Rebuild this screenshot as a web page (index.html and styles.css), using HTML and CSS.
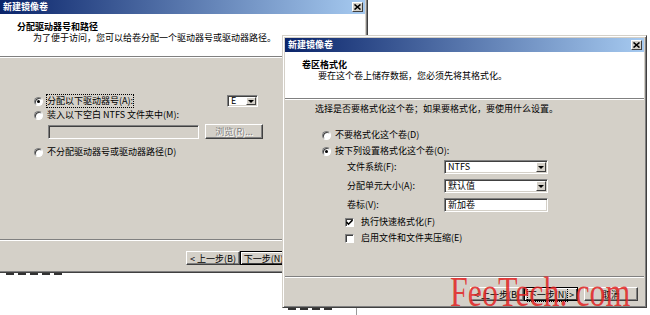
FILE: index.html
```html
<!DOCTYPE html>
<html lang="zh-CN">
<head>
  <meta charset="UTF-8">
  <title>新建镜像卷</title>
  <link rel="stylesheet" href="styles.css">
</head>
<body>
  <!-- 后面的窗口：分配驱动器号和路径 -->
  <div class="window win-back">
    <div class="titlebar">
      <span class="title">新建镜像卷</span>
      <span class="close"><svg width="7" height="6" viewBox="0 0 7 6"><path d="M0.5 0.5 L6.5 5.5 M6.5 0.5 L0.5 5.5" stroke="#000" stroke-width="1.6"/></svg></span>
    </div>
    <div class="header">
      <div class="head-title">分配驱动器号和路径</div>
      <div class="head-sub">为了便于访问，您可以给卷分配一个驱动器号或驱动器路径。</div>
    </div>
    <div class="body body-drive">
      <div class="row row-letter">
        <label class="radio"><span class="dot checked"></span><span class="focus">分配以下驱动器号(A):</span></label>
        <div class="select select-letter"><span class="value">E</span><span class="arrow"></span></div>
      </div>
      <label class="radio row-mount"><span class="dot"></span>装入以下空白 NTFS 文件夹中(M):</label>
      <div class="row row-path">
        <div class="field field-disabled"></div>
        <button class="btn btn-disabled">浏览(R)...</button>
      </div>
      <label class="radio row-none"><span class="dot"></span>不分配驱动器号或驱动器路径(D)</label>
    </div>
    <div class="footer">
      <button class="btn">&lt; 上一步(B)</button>
      <button class="btn btn-default">下一步(N) &gt;</button>
      <button class="btn btn-cancel">取消</button>
    </div>
  </div>
  <!-- 下面还露出一点别的窗口 -->
  <div class="peek peek-back"><i></i><i></i><i></i><i></i><i></i></div>

  <!-- 前面的窗口：卷区格式化 -->
  <div class="window win-front">
    <div class="titlebar">
      <span class="title">新建镜像卷</span>
      <span class="close"><svg width="7" height="6" viewBox="0 0 7 6"><path d="M0.5 0.5 L6.5 5.5 M6.5 0.5 L0.5 5.5" stroke="#000" stroke-width="1.6"/></svg></span>
    </div>
    <div class="header">
      <div class="head-title">卷区格式化</div>
      <div class="head-sub">要在这个卷上储存数据，您必须先将其格式化。</div>
    </div>
    <div class="body body-format">
      <div class="intro">选择是否要格式化这个卷；如果要格式化，要使用什么设置。</div>
      <label class="radio opt-no"><span class="dot"></span>不要格式化这个卷(D)</label>
      <label class="radio opt-yes"><span class="dot checked"></span>按下列设置格式化这个卷(O):</label>
      <div class="form-row">
        <span class="form-label">文件系统(F):</span>
        <div class="select select-wide"><span class="value">NTFS</span><span class="arrow"></span></div>
      </div>
      <div class="form-row">
        <span class="form-label">分配单元大小(A):</span>
        <div class="select select-wide"><span class="value">默认值</span><span class="arrow"></span></div>
      </div>
      <div class="form-row">
        <span class="form-label">卷标(V):</span>
        <div class="field field-wide">新加卷</div>
      </div>
      <label class="check check-quick"><span class="box"><svg width="7" height="7" viewBox="0 0 7 7"><path d="M0.5 3 L2.5 5.2 L6.5 1" stroke="#000" stroke-width="1.6" fill="none"/></svg></span>执行快速格式化(F)</label>
      <label class="check check-zip"><span class="box"></span>启用文件和文件夹压缩(E)</label>
    </div>
    <div class="footer">
      <button class="btn">&lt; 上一步(B)</button>
      <button class="btn btn-default"><span class="focus">下一步(N)</span> &gt;</button>
      <button class="btn btn-cancel">取消</button>
    </div>
  </div>
  <div class="peek peek-front"><i></i><i></i><i></i><i></i><b></b></div>

  <div class="watermark">FeoTech. com</div>
</body>
</html>
```

FILE: styles.css
```css
/* 整体 */
body {
  margin: 0;
  width: 650px;
  height: 315px;
  position: relative;
  overflow: hidden;
  background: #fff;
  font-family: "Noto Sans CJK SC", "Liberation Sans", sans-serif;
  font-size: 9px;
  color: #000;
}

/* 经典窗口框 */
.window {
  position: absolute;
  box-sizing: border-box;
  display: flex;
  flex-direction: column;
  padding: 2px;
  background: #d4d0c8;
  border: 1px solid;
  border-color: #d4d0c8 #404040 #404040 #d4d0c8;
  box-shadow: inset 1px 1px #fff, inset -1px -1px #808080;
}
.win-back {
  left: -3px;
  top: -3px;
  width: 371px;
  height: 276px;
}
.win-front {
  left: 282px;
  top: 35px;
  width: 365px;
  height: 273px;
}

/* 标题栏 */
.titlebar {
  height: 14px;
  flex: none;
  display: flex;
  align-items: center;
  justify-content: space-between;
  background: linear-gradient(to right, #0a246a, #a6caf0);
}
.title {
  color: #fff;
  font-weight: bold;
  padding-left: 3px;
  line-height: 14px;
}
.close {
  width: 11px;
  height: 10px;
  margin-right: 2px;
  box-sizing: border-box;
  display: flex;
  align-items: center;
  justify-content: center;
  background: #d4d0c8;
  border: 1px solid;
  border-color: #fff #404040 #404040 #fff;
}

/* 白色页眉 */
.header {
  flex: none;
  box-sizing: border-box;
  background: #fff;
  border-bottom: 1px solid #808080;
  padding: 7px 0 0 17px;
  line-height: 11px;
}
.win-back .header { height: 43px; }
.win-front .header { height: 47px; }
.head-title { font-weight: bold; }
.head-sub { padding-left: 16px; }

/* 主体 */
.body {
  flex: 1;
  border-top: 1px solid #fff;
  display: flex;
  flex-direction: column;
  align-items: flex-start;
  line-height: 12px;
}
.body-drive { padding: 37px 0 0 34px; }
.body-format { padding: 3px 0 0 30px; }

/* 底部按钮 */
.footer {
  flex: none;
  box-sizing: border-box;
  display: flex;
  justify-content: flex-end;
  align-items: flex-start;
  border-top: 1px solid #808080;
  box-shadow: inset 0 1px #fff;
}
.win-back .footer { height: 31px; padding: 11px 11px 0 0; }
.win-front .footer { height: 29px; padding: 10px 6px 0 0; }

.btn {
  width: 54px;
  height: 14px;
  padding: 0;
  box-sizing: border-box;
  font: inherit;
  line-height: 11px;
  color: #000;
  background: #d4d0c8;
  border: 1px solid;
  border-color: #fff #404040 #404040 #fff;
  box-shadow: inset -1px -1px #808080;
}
.btn-default {
  border-color: #000;
  box-shadow: inset 1px 1px #fff, inset -1px -1px #404040;
}
.btn-cancel { margin-left: 6px; }
.btn-disabled {
  color: #808080;
  text-shadow: 1px 1px #fff;
}

/* 单选与复选 */
.radio, .check {
  display: flex;
  align-items: center;
  height: 12px;
  white-space: nowrap;
}
.dot {
  width: 9px;
  height: 9px;
  box-sizing: border-box;
  margin-right: 4px;
  border-radius: 50%;
  background: #fff;
  border: 1px solid;
  border-color: #808080 #fff #fff #808080;
  box-shadow: inset 1px 1px #404040;
  position: relative;
}
.dot.checked::after {
  content: "";
  position: absolute;
  left: 2px;
  top: 2px;
  width: 3px;
  height: 3px;
  border-radius: 50%;
  background: #000;
}
.focus {
  outline: 1px dotted #000;
  outline-offset: 0;
}
.box {
  width: 9px;
  height: 9px;
  box-sizing: border-box;
  margin-right: 7px;
  background: #fff;
  border: 1px solid;
  border-color: #808080 #fff #fff #808080;
  box-shadow: inset 1px 1px #404040;
  display: flex;
  align-items: center;
  justify-content: center;
}

/* 下拉框与输入框 */
.select, .field {
  box-sizing: border-box;
  height: 14px;
  background: #fff;
  border: 1px solid;
  border-color: #808080 #fff #fff #808080;
  box-shadow: inset 1px 1px #404040, inset -1px -1px #d4d0c8;
  display: flex;
  align-items: center;
}
.select .value {
  flex: 1;
  padding-left: 3px;
  line-height: 12px;
}
.arrow {
  width: 10px;
  height: 10px;
  margin-right: 1px;
  box-sizing: border-box;
  background: #d4d0c8;
  border: 1px solid;
  border-color: #fff #404040 #404040 #fff;
  position: relative;
}
.arrow::after {
  content: "";
  position: absolute;
  left: 1px;
  top: 3px;
  border-left: 3px solid transparent;
  border-right: 3px solid transparent;
  border-top: 3px solid #000;
}
.field-disabled { background: #d4d0c8; }
.field-wide {
  width: 104px;
  padding-left: 3px;
}

/* 分配驱动器号窗口的行 */
.row { display: flex; align-items: center; }
.row-letter {
  width: 224px;
  height: 12px;
  justify-content: space-between;
}
.select-letter { width: 31px; height: 12px; }
.select-letter .arrow { height: 8px; }
.select-letter .arrow::after { top: 2px; }
.row-mount { margin-top: 2px; }
.row-path {
  margin: 3px 0 0 14px;
}
.row-path .field { width: 151px; }
.row-path .btn { width: 58px; height: 15px; margin-left: 6px; }
.row-none { margin-top: 7px; }

/* 格式化窗口的行 */
.opt-no { margin: 14px 0 0 7px; }
.opt-yes { margin: 4px 0 0 7px; }
.form-row {
  display: flex;
  align-items: center;
  margin: 3px 0 0 32px;
}
.form-row + .form-row { margin-top: 5px; }
.form-label { width: 97px; }
.select-wide { width: 104px; }
.check-quick { margin: 4px 0 0 30px; }
.check-zip { margin: 4px 0 0 30px; }

/* 被挡住的窗口露出的一点笔画 */
.peek {
  position: absolute;
  display: flex;
  align-items: flex-start;
  gap: 4px;
  height: 4px;
}
.peek i {
  width: 8px;
  height: 2px;
  background: #333;
}
.peek-back { left: 6px; top: 273px; }
.peek-front { left: 288px; top: 308px; }
.peek b {
  width: 1px;
  height: 7px;
  margin-left: 20px;
  background: #999;
}

/* 水印 */
.watermark {
  position: absolute;
  left: 450px;
  top: 271px;
  font-family: "Liberation Serif", serif;
  font-size: 42px;
  line-height: 42px;
  color: rgba(226, 34, 34, 0.85);
  transform: scaleX(0.76);
  transform-origin: left top;
  white-space: nowrap;
  pointer-events: none;
}
```
